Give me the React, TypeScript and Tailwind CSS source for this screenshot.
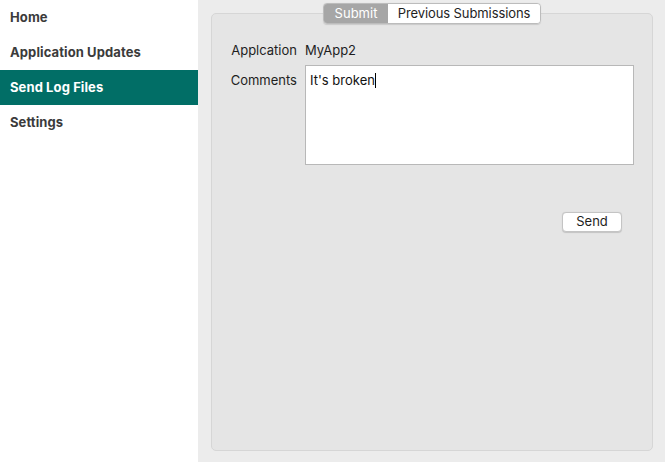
import React from "react";

const items = ["Home", "Application Updates", "Send Log Files", "Settings"];

export default function App() {
  return (
    <div className="flex h-[462px] w-[665px] overflow-hidden" style={{ fontFamily: "Inter, 'Liberation Sans', sans-serif" }}>
      <div className="w-[198px] shrink-0 bg-white">
        {items.map((it) => (
          <div
            key={it}
            className={
              "h-[35px] flex items-center pl-[10px] text-[13px] font-bold tracking-[0.1px] " +
              (it === "Send Log Files" ? "bg-[#016e66] text-white" : "text-[#3b3b3b]")
            }
          >
            {it}
          </div>
        ))}
      </div>
      <div className="relative flex-1 bg-[#ececec] pl-[13px] pr-[12px] pt-[13px] pb-[11px] flex">
        <div className="flex-1 flex flex-col rounded-[5px] bg-[#e5e5e5] border border-[#d6d6d6] pt-[29px] text-[13px] text-[#1e1e1e]">
          <div className="flex h-[16px] items-center">
            <div className="w-[85px] text-right">Applcation</div>
            <div className="ml-[8px]">MyApp2</div>
          </div>
          <div className="flex items-start mt-[6px]">
            <div className="w-[85px] text-right pt-[7px] leading-[16px]">Comments</div>
            <div className="ml-[8px] w-[329px] h-[100px] bg-white border border-[#b8b8b8] pl-[4px] pt-[6px] leading-[16px] text-[#111]">
              It's broken<span className="inline-block w-[1px] h-[15px] bg-black align-[-3px]" />
            </div>
          </div>
          <div className="flex mt-[47px]">
            <div className="ml-[350px] w-[60px] h-[20px] rounded-[4px] bg-white border border-[#c4c4c4] shadow-[0_0.5px_1px_rgba(0,0,0,0.15)] flex items-center justify-center text-[13px] text-[#1e1e1e]">
              Send
            </div>
          </div>
        </div>
        <div className="absolute top-[3px] left-[125px] flex h-[21px] rounded-[4px] border border-[#bcbcbc] overflow-hidden text-[13px] shadow-[0_0.5px_1px_rgba(0,0,0,0.12)]">
          <div className="w-[64px] bg-[#a6a6a6] text-white flex items-center justify-center">Submit</div>
          <div className="w-[152px] bg-white text-[#1e1e1e] flex items-center justify-center tracking-[-0.1px]">Previous Submissions</div>
        </div>
      </div>
    </div>
  );
}
